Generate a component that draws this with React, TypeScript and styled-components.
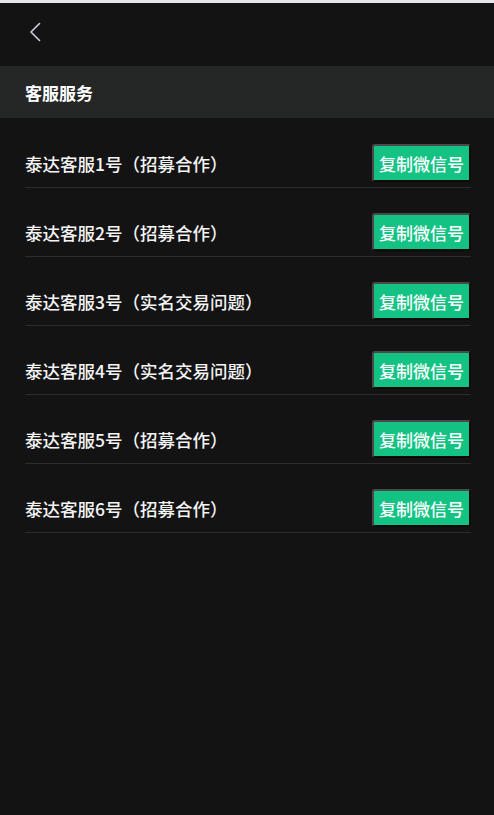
import React from "react";
import styled, { createGlobalStyle } from "styled-components";

const Global = createGlobalStyle`
  html, body { margin: 0; padding: 0; background: #131313; }
  body { font-family: "Noto Sans CJK SC", "Noto Sans", sans-serif; }
  * { box-sizing: border-box; }
`;

const Page = styled.div`
  min-height: 815px;
  background: #131313;
  border-top: 3px solid #e6e6ea;
  display: flex;
  flex-direction: column;
`;

const Header = styled.header`
  height: 63px;
  display: flex;
  align-items: flex-start;
  padding: 18px 0 0 27px;
`;

const BackButton = styled.button`
  background: none;
  border: none;
  padding: 0;
  width: 16px;
  height: 22px;
  display: flex;
  align-items: center;
  justify-content: center;
  cursor: pointer;
`;

const SectionBar = styled.div`
  height: 52px;
  background: #252727;
  display: flex;
  align-items: center;
  padding-left: 25px;
  color: #ffffff;
  font-weight: 700;
  font-size: 17px;
`;

const List = styled.div`
  display: flex;
  flex-direction: column;
  padding: 1px 23px 0 25px;
`;

const Row = styled.div`
  display: flex;
  align-items: center;
  justify-content: space-between;
  padding: 25px 0 5px;
  border-bottom: 1px solid #2c2c2c;
`;

const Name = styled.span`
  color: #f4f4f4;
  font-size: 17.5px;
  font-weight: 500;
`;

const CopyButton = styled.button`
  height: 38px;
  width: 99px;
  padding: 0;
  background: #14c384;
  color: #ffffff;
  font-family: "Noto Sans CJK SC", "Noto Sans", sans-serif;
  font-size: 17px;
  font-weight: 500;
  border: 2px solid;
  border-color: #4a4a4a #0a0a0a #0a0a0a #4a4a4a;
  border-radius: 3px;
  cursor: pointer;
`;

const rows = [
  "泰达客服1号（招募合作）",
  "泰达客服2号（招募合作）",
  "泰达客服3号（实名交易问题）",
  "泰达客服4号（实名交易问题）",
  "泰达客服5号（招募合作）",
  "泰达客服6号（招募合作）",
];

export default function App() {
  return (
    <>
      <Global />
      <Page>
        <Header>
          <BackButton aria-label="返回">
            <svg width="12" height="20" viewBox="0 0 12 20" fill="none">
              <path d="M10.5 1.5 L2 10 L10.5 18.5" stroke="#c9d0dc" strokeWidth="1.6" strokeLinecap="round" strokeLinejoin="round" />
            </svg>
          </BackButton>
        </Header>
        <SectionBar>客服服务</SectionBar>
        <List>
          {rows.map((r) => (
            <Row key={r}>
              <Name>{r}</Name>
              <CopyButton>复制微信号</CopyButton>
            </Row>
          ))}
        </List>
      </Page>
    </>
  );
}
